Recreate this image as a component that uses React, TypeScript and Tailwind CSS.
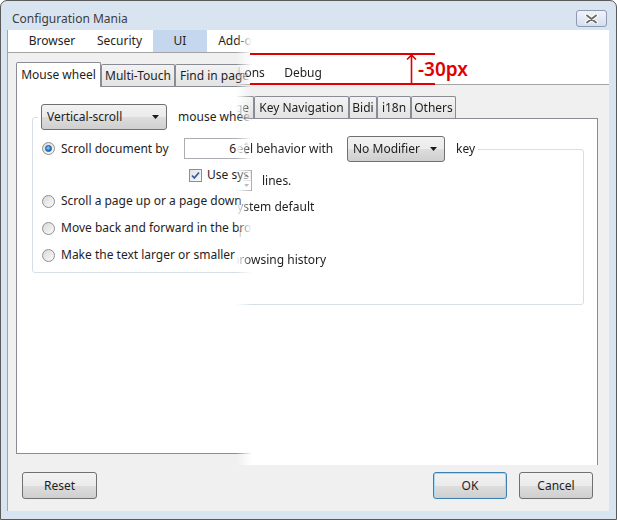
import React from "react";

const btnBg =
  "bg-[linear-gradient(#f2f2f2_0%,#ebebeb_50%,#dddddd_51%,#cfcfcf_100%)]";

const topTabs = [
  { label: "Browser", w: "w-[68px]" },
  { label: "Security", w: "w-[67px]" },
  { label: "UI", w: "w-[54px]", active: true },
  { label: "Add-ons", w: "w-[69px]" },
  { label: "Debug", w: "w-[54px]" },
];

const subTabs = [
  { label: "Mouse wheel", w: "w-[85px]", active: true },
  { label: "Multi-Touch", w: "w-[74px]" },
  { label: "Find in page", w: "w-[79px]" },
  { label: "Key Navigation", w: "w-[95px]" },
  { label: "Bidi", w: "w-[28px]" },
  { label: "i18n", w: "w-[34px]" },
  { label: "Others", w: "w-[45px]" },
];

function Combo({ text, w }: { text: string; w: string }) {
  return (
    <div
      className={`${w} ${btnBg} flex h-[26px] items-center justify-between rounded-[3px] border border-[#707070] pl-[5px] pr-[7px]`}
    >
      <span>{text}</span>
      <svg width="7" height="4" viewBox="0 0 7 4">
        <path d="M0 0h7L3.5 4z" fill="#1a1a1a" />
      </svg>
    </div>
  );
}

function Radio({ on }: { on?: boolean }) {
  return (
    <div className="flex h-[13px] w-[13px] shrink-0 items-center justify-center rounded-full border border-[#8e8f8f] bg-[linear-gradient(135deg,#d8d8d8,#fbfbfb)]">
      {on && (
        <div className="h-[7px] w-[7px] rounded-full border border-[#1b4f8c] bg-[radial-gradient(circle_at_40%_35%,#8fd0ff,#1f6fc2_70%)]" />
      )}
    </div>
  );
}

function Check() {
  return (
    <div className="flex h-[13px] w-[13px] shrink-0 items-center justify-center border border-[#8e8f8f] bg-[linear-gradient(135deg,#dfe3ea,#f8f9fb)]">
      <svg width="9" height="9" viewBox="0 0 9 9">
        <path d="M1 4.5l2.3 2.5L8 1.5" fill="none" stroke="#3d5a98" strokeWidth="1.8" />
      </svg>
    </div>
  );
}

function Spin() {
  return (
    <div className="flex h-[21px] w-[68px] border border-[#abadb3] bg-white">
      <div className="flex flex-1 items-center justify-end pr-[6px]">6</div>
      <div className="flex w-[9px] flex-col">
        <div className="flex flex-1 items-center justify-center border-b border-[#dcdcdc]">
          <svg width="5" height="3" viewBox="0 0 5 3">
            <path d="M0 3h5L2.5 0z" fill="#9a9a9a" />
          </svg>
        </div>
        <div className="flex flex-1 items-center justify-center">
          <svg width="5" height="3" viewBox="0 0 5 3">
            <path d="M0 0h5L2.5 3z" fill="#9a9a9a" />
          </svg>
        </div>
      </div>
    </div>
  );
}

function Button({ label, primary, w }: { label: string; primary?: boolean; w: string }) {
  return (
    <div
      className={`${w} ${btnBg} flex h-[27px] items-center justify-center rounded-[3px] border ${
        primary ? "border-[#3c7fb1] shadow-[inset_0_0_0_1px_#a8d9f5]" : "border-[#707070]"
      }`}
    >
      {label}
    </div>
  );
}

function ClientContent() {
  return (
    <div className="flex h-[481px] w-[601px] flex-col bg-[#f0f0f0] text-[12px] text-[#1e1e1e]">
      {/* top category tabs */}
      <div className="flex h-[23px] border-b border-[#a5a5a5] bg-white pl-[10px]">
        {topTabs.map((t) => (
          <div
            key={t.label}
            className={`${t.w} flex items-center justify-center ${t.active ? "bg-[#c4d7ef]" : ""}`}
          >
            {t.label}
          </div>
        ))}
      </div>

      {/* sub tabs */}
      <div className="ml-[8px] mt-[9px] flex h-[24px] items-end">
        {subTabs.map((t) =>
          t.active ? (
            <div
              key={t.label}
              className={`${t.w} relative z-10 -mb-px flex h-[25px] items-center justify-center rounded-t-[2px] border border-b-0 border-[#898c95] bg-white`}
            >
              {t.label}
            </div>
          ) : (
            <div
              key={t.label}
              className={`${t.w} flex h-[22px] items-center justify-center whitespace-nowrap rounded-t-[2px] border border-b-0 border-[#898c95] bg-[linear-gradient(#f3f3f3,#e3e3e3)]`}
            >
              {t.label}
            </div>
          )
        )}
      </div>

      {/* tab panel */}
      <div className="ml-[8px] h-[368px] w-[582px] border border-[#898c95] bg-white pt-[17px]">
        <fieldset className="ml-[15px] w-[552px] rounded-[3px] border border-[#d5dfe5] pb-[9px]">
          <legend className="ml-[5px] flex items-center px-[3px]">
            <Combo text="Vertical-scroll" w="w-[126px]" />
            <span className="ml-[11px] w-[160px] whitespace-nowrap">mouse wheel behavior with</span>
            <span className="ml-[9px]">
              <Combo text="No Modifier" w="w-[98px]" />
            </span>
            <span className="ml-[11px]">key</span>
          </legend>

          <div className="mt-[8px] flex h-[21px] items-center pl-[9px]">
            <Radio on />
            <span className="ml-[6px] w-[123px]">Scroll document by</span>
            <Spin />
            <span className="ml-[10px]">lines.</span>
          </div>
          <div className="mt-[8px] flex h-[16px] items-center pl-[156px]">
            <Check />
            <span className="ml-[5px]">Use system default</span>
          </div>
          <div className="mt-[10px] flex h-[16px] items-center pl-[9px]">
            <Radio />
            <span className="ml-[6px]">Scroll a page up or a page down</span>
          </div>
          <div className="mt-[11px] flex h-[16px] items-center pl-[9px]">
            <Radio />
            <span className="ml-[6px]">Move back and forward in the browsing history</span>
          </div>
          <div className="mt-[11px] flex h-[16px] items-center pl-[9px]">
            <Radio />
            <span className="ml-[6px]">Make the text larger or smaller</span>
          </div>
        </fieldset>
      </div>

      {/* dialog buttons */}
      <div className="mt-[18px] flex items-center pl-[14px] pr-[16px]">
        <Button label="Reset" w="w-[75px]" />
        <div className="flex-1" />
        <Button label="OK" primary w="w-[74px]" />
        <div className="w-[12px]" />
        <Button label="Cancel" w="w-[74px]" />
      </div>
    </div>
  );
}

export default function App() {
  return (
    <div className="relative h-[520px] w-[617px] bg-white font-['Noto_Sans',sans-serif]">
      <div className="flex h-full flex-col rounded-t-[7px] border border-[#5a5a5a] bg-[#d9e4f1]">
        {/* title bar */}
        <div className="flex h-[29px] items-center justify-between pl-[11px] pr-[9px] pt-[6px] text-[12px] text-[#3d3d3d]">
          <span>Configuration Mania</span>
          <div className="flex h-[17px] w-[31px] items-center justify-center rounded-[3px] border border-[#8b9bb4] bg-[linear-gradient(#f0f4f9,#d5dfec)]">
            <svg width="13" height="10" viewBox="0 0 13 10">
              <path d="M2 1.5l9 7M11 1.5l-9 7" stroke="#ffffff" strokeWidth="4" strokeLinecap="round" />
              <path d="M2 1.5l9 7M11 1.5l-9 7" stroke="#6d6d6d" strokeWidth="2" strokeLinecap="round" />
            </svg>
          </div>
        </div>

        {/* client area */}
        <div className="relative ml-[7px] w-[601px] shadow-[-1px_0_0_#9aa5b3]">
          <ClientContent />

          {/* comparison overlay: the same dialog pushed down */}
          <div className="absolute left-[228px] top-0 h-[435px] w-[373px] overflow-hidden bg-white [mask-image:linear-gradient(to_right,transparent,black_16px)]">
            <div className="absolute left-[-228px] top-[32px]">
              <ClientContent />
            </div>
          </div>
        </div>
      </div>

      {/* annotation */}
      <div className="absolute left-[250px] top-[53px] h-[2px] w-[185px] bg-[#e00000]" />
      <div className="absolute left-[250px] top-[83px] h-[2px] w-[185px] bg-[#e00000]" />
      <svg className="absolute left-[405px] top-[54px]" width="13" height="30" viewBox="0 0 13 30">
        <path d="M6.5 1V30M2 5.5L6.5 1L11 5.5" fill="none" stroke="#e00000" strokeWidth="1.6" />
      </svg>
      <div className="absolute left-[418px] top-[56px] text-[19px] font-semibold leading-[26px] text-[#e00000]">
        -30px
      </div>
    </div>
  );
}
